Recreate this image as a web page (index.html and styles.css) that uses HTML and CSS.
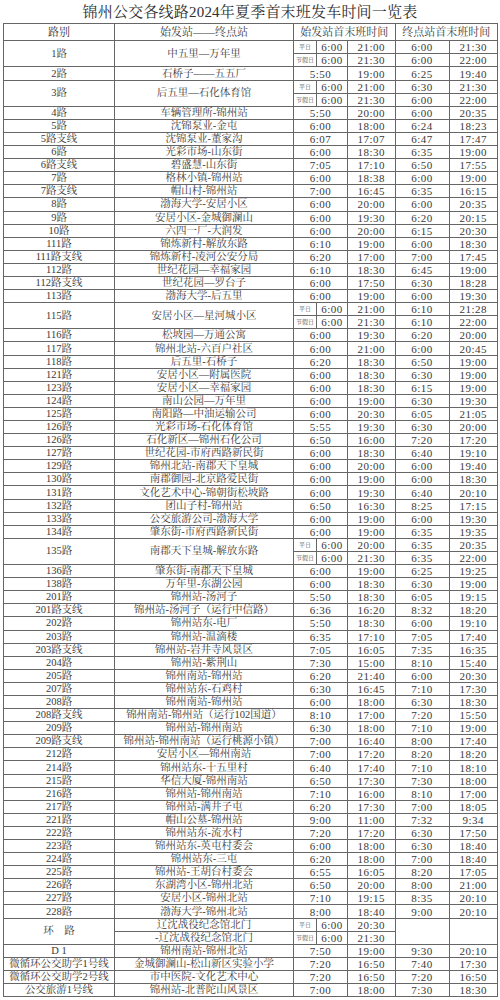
FILE: index.html
```html
<!DOCTYPE html>
<html lang="zh-CN">
<head>
<meta charset="utf-8">
<title>锦州公交各线路2024年夏季首末班发车时间一览表</title>
<link rel="stylesheet" href="styles.css">
</head>
<body>
<div class="page">
<h1 class="title">锦州公交各线路2024年夏季首末班发车时间一览表</h1>
<table class="sched">
<colgroup>
<col class="c-route"><col class="c-stn"><col class="c-lab"><col class="c-t1"><col class="c-t2"><col class="c-t3"><col class="c-t4">
</colgroup>
<thead>
<tr><th>路别</th><th>始发站——终点站</th><th colspan="3">始发站首末班时间</th><th colspan="2">终点站首末班时间</th></tr>
</thead>
<tbody>
<tr><th rowspan="2">1路</th><td rowspan="2" class="s">中五里—万年里</td><td class="l">平日</td><td>6:00</td><td>21:00</td><td>6:00</td><td>21:30</td></tr>
<tr><td class="l">节假日</td><td>6:00</td><td>21:30</td><td>6:00</td><td>22:00</td></tr>
<tr><th>2路</th><td class="s">石桥子——五五厂</td><td colspan="2">5:50</td><td>19:00</td><td>6:25</td><td>19:40</td></tr>
<tr><th rowspan="2">3路</th><td rowspan="2" class="s">后五里—石化体育馆</td><td class="l">平日</td><td>6:00</td><td>21:00</td><td>6:30</td><td>21:30</td></tr>
<tr><td class="l">节假日</td><td>6:00</td><td>21:30</td><td>6:00</td><td>22:00</td></tr>
<tr><th>4路</th><td class="s">车辆管理所-锦州站</td><td colspan="2">5:50</td><td>20:00</td><td>6:00</td><td>20:35</td></tr>
<tr><th>5路</th><td class="s">沈锦泵业-金屯</td><td colspan="2">6:00</td><td>18:00</td><td>6:24</td><td>18:23</td></tr>
<tr><th>5路支线</th><td class="s">沈锦泵业-董家沟</td><td colspan="2">6:07</td><td>17:07</td><td>6:47</td><td>17:47</td></tr>
<tr><th>6路</th><td class="s">光彩市场-山东街</td><td colspan="2">6:00</td><td>18:30</td><td>6:35</td><td>19:00</td></tr>
<tr><th>6路支线</th><td class="s">碧盛慧-山东街</td><td colspan="2">7:05</td><td>17:10</td><td>6:50</td><td>17:55</td></tr>
<tr><th>7路</th><td class="s">格林小镇-锦州站</td><td colspan="2">6:00</td><td>18:38</td><td>6:00</td><td>19:00</td></tr>
<tr><th>7路支线</th><td class="s">帽山村-锦州站</td><td colspan="2">7:00</td><td>16:45</td><td>6:35</td><td>16:15</td></tr>
<tr><th>8路</th><td class="s">渤海大学-安居小区</td><td colspan="2">6:00</td><td>20:00</td><td>6:00</td><td>20:35</td></tr>
<tr><th>9路</th><td class="s">安居小区-金城御澜山</td><td colspan="2">6:00</td><td>19:30</td><td>6:20</td><td>20:15</td></tr>
<tr><th>10路</th><td class="s">六四一厂-大润发</td><td colspan="2">6:00</td><td>20:00</td><td>6:15</td><td>20:30</td></tr>
<tr><th>111路</th><td class="s">锦炼新村-解放东路</td><td colspan="2">6:10</td><td>19:00</td><td>6:00</td><td>18:30</td></tr>
<tr><th>111路支线</th><td class="s">锦炼新村-凌河公安分局</td><td colspan="2">6:20</td><td>17:00</td><td>7:00</td><td>17:45</td></tr>
<tr><th>112路</th><td class="s">世纪花园—幸福家园</td><td colspan="2">6:10</td><td>18:30</td><td>6:45</td><td>19:00</td></tr>
<tr><th>112路支线</th><td class="s">世纪花园—罗台子</td><td colspan="2">6:00</td><td>17:50</td><td>6:30</td><td>18:28</td></tr>
<tr><th>113路</th><td class="s">渤海大学-后五里</td><td colspan="2">6:00</td><td>19:00</td><td>6:00</td><td>19:30</td></tr>
<tr><th rowspan="2">115路</th><td rowspan="2" class="s">安居小区—星河城小区</td><td class="l">平日</td><td>6:00</td><td>21:00</td><td>6:10</td><td>21:28</td></tr>
<tr><td class="l">节假日</td><td>6:00</td><td>21:30</td><td>6:10</td><td>22:00</td></tr>
<tr><th>116路</th><td class="s">松坡园—万通公寓</td><td colspan="2">6:00</td><td>19:30</td><td>6:20</td><td>20:00</td></tr>
<tr><th>117路</th><td class="s">锦州北站-六百户社区</td><td colspan="2">6:00</td><td>21:00</td><td>6:00</td><td>20:45</td></tr>
<tr><th>118路</th><td class="s">后五里-石桥子</td><td colspan="2">6:20</td><td>18:30</td><td>6:50</td><td>19:00</td></tr>
<tr><th>121路</th><td class="s">安居小区—附属医院</td><td colspan="2">6:00</td><td>18:30</td><td>6:30</td><td>19:00</td></tr>
<tr><th>123路</th><td class="s">安居小区—幸福家园</td><td colspan="2">6:00</td><td>18:30</td><td>6:15</td><td>19:00</td></tr>
<tr><th>124路</th><td class="s">南山公园—万年里</td><td colspan="2">6:00</td><td>19:00</td><td>6:30</td><td>19:30</td></tr>
<tr><th>125路</th><td class="s">南阳路—中油运输公司</td><td colspan="2">6:00</td><td>20:30</td><td>6:05</td><td>21:05</td></tr>
<tr><th>126路</th><td class="s">光彩市场-石化体育馆</td><td colspan="2">5:55</td><td>19:30</td><td>6:30</td><td>20:00</td></tr>
<tr><th>126路</th><td class="s">石化新区—锦州石化公司</td><td colspan="2">6:50</td><td>16:00</td><td>7:20</td><td>17:20</td></tr>
<tr><th>127路</th><td class="s">世纪花园-市府西路新民街</td><td colspan="2">6:00</td><td>18:30</td><td>6:40</td><td>19:10</td></tr>
<tr><th>129路</th><td class="s">锦州北站-南郡天下皇城</td><td colspan="2">6:00</td><td>20:00</td><td>6:00</td><td>19:40</td></tr>
<tr><th>130路</th><td class="s">南郡御园-北京路爱民街</td><td colspan="2">6:00</td><td>19:00</td><td>6:00</td><td>18:30</td></tr>
<tr><th>131路</th><td class="s">文化艺术中心-锦朝街松坡路</td><td colspan="2">6:00</td><td>19:30</td><td>6:40</td><td>20:10</td></tr>
<tr><th>132路</th><td class="s">团山子村-锦州站</td><td colspan="2">6:50</td><td>16:30</td><td>8:25</td><td>17:15</td></tr>
<tr><th>133路</th><td class="s">公交旅游公司-渤海大学</td><td colspan="2">6:00</td><td>19:00</td><td>6:00</td><td>19:30</td></tr>
<tr><th>134路</th><td class="s">肇东街-市府西路新民街</td><td colspan="2">6:00</td><td>19:00</td><td>6:35</td><td>19:35</td></tr>
<tr><th rowspan="2">135路</th><td rowspan="2" class="s">南郡天下皇城-解放东路</td><td class="l">平日</td><td>6:00</td><td>20:00</td><td>6:35</td><td>20:35</td></tr>
<tr><td class="l">节假日</td><td>6:00</td><td>21:30</td><td>6:35</td><td>22:00</td></tr>
<tr><th>136路</th><td class="s">肇东街-南郡天下皇城</td><td colspan="2">6:00</td><td>19:00</td><td>6:25</td><td>19:25</td></tr>
<tr><th>138路</th><td class="s">万年里-东湖公园</td><td colspan="2">6:00</td><td>18:30</td><td>6:30</td><td>19:00</td></tr>
<tr><th>201路</th><td class="s">锦州站-汤河子</td><td colspan="2">5:50</td><td>18:30</td><td>6:05</td><td>19:15</td></tr>
<tr><th>201路支线</th><td class="s">锦州站-汤河子（运行中信路）</td><td colspan="2">6:36</td><td>16:20</td><td>8:32</td><td>18:20</td></tr>
<tr><th>202路</th><td class="s">锦州站东-电厂</td><td colspan="2">5:50</td><td>18:30</td><td>6:00</td><td>19:10</td></tr>
<tr><th>203路</th><td class="s">锦州站-温滴楼</td><td colspan="2">6:35</td><td>17:10</td><td>7:05</td><td>17:40</td></tr>
<tr><th>203路支线</th><td class="s">锦州站-岩井寺风景区</td><td colspan="2">7:05</td><td>16:05</td><td>7:35</td><td>16:35</td></tr>
<tr><th>204路</th><td class="s">锦州站-紫荆山</td><td colspan="2">7:30</td><td>15:00</td><td>8:10</td><td>15:40</td></tr>
<tr><th>205路</th><td class="s">锦州南站-锦州站</td><td colspan="2">6:20</td><td>21:40</td><td>6:00</td><td>20:30</td></tr>
<tr><th>207路</th><td class="s">锦州站东-石鸡村</td><td colspan="2">6:30</td><td>16:45</td><td>7:10</td><td>17:30</td></tr>
<tr><th>208路</th><td class="s">锦州南站-锦州站</td><td colspan="2">6:00</td><td>18:00</td><td>6:30</td><td>18:30</td></tr>
<tr><th>208路支线</th><td class="s">锦州南站-锦州站（运行102国道）</td><td colspan="2">8:10</td><td>17:00</td><td>7:20</td><td>15:50</td></tr>
<tr><th>209路</th><td class="s">锦州站-锦州南站</td><td colspan="2">6:30</td><td>18:00</td><td>7:10</td><td>19:00</td></tr>
<tr><th>209路支线</th><td class="s">锦州站-锦州南站（运行桃源小镇）</td><td colspan="2">7:00</td><td>16:40</td><td>8:00</td><td>17:40</td></tr>
<tr><th>212路</th><td class="s">安居小区—锦州南站</td><td colspan="2">7:00</td><td>17:20</td><td>8:20</td><td>18:20</td></tr>
<tr><th>214路</th><td class="s">锦州站东-十五里村</td><td colspan="2">6:40</td><td>17:40</td><td>7:10</td><td>18:10</td></tr>
<tr><th>215路</th><td class="s">华信大厦-锦州南站</td><td colspan="2">6:50</td><td>17:30</td><td>7:30</td><td>18:00</td></tr>
<tr><th>216路</th><td class="s">锦州站-锦州南站</td><td colspan="2">7:10</td><td>16:00</td><td>8:10</td><td>17:00</td></tr>
<tr><th>217路</th><td class="s">锦州站-满井子屯</td><td colspan="2">6:20</td><td>17:30</td><td>7:00</td><td>18:05</td></tr>
<tr><th>221路</th><td class="s">帽山公墓-锦州站</td><td colspan="2">9:00</td><td>11:00</td><td>7:32</td><td>9:34</td></tr>
<tr><th>222路</th><td class="s">锦州站东-流水村</td><td colspan="2">7:20</td><td>17:20</td><td>6:30</td><td>17:50</td></tr>
<tr><th>223路</th><td class="s">锦州站东-英屯村委会</td><td colspan="2">6:00</td><td>18:00</td><td>6:30</td><td>18:40</td></tr>
<tr><th>224路</th><td class="s">锦州站东-三屯</td><td colspan="2">6:20</td><td>18:00</td><td>7:00</td><td>18:40</td></tr>
<tr><th>225路</th><td class="s">锦州站-王胡台村委会</td><td colspan="2">6:55</td><td>16:05</td><td>8:20</td><td>17:05</td></tr>
<tr><th>226路</th><td class="s">东湖湾小区-锦州北站</td><td colspan="2">6:50</td><td>20:00</td><td>8:00</td><td>21:00</td></tr>
<tr><th>227路</th><td class="s">安居小区-锦州北站</td><td colspan="2">7:10</td><td>19:15</td><td>8:35</td><td>20:10</td></tr>
<tr><th>228路</th><td class="s">渤海大学-锦州北站</td><td colspan="2">8:00</td><td>18:40</td><td>9:00</td><td>20:10</td></tr>
<tr><th rowspan="2">环　路</th><td class="s">辽沈战役纪念馆北门</td><td class="l">平日</td><td>6:00</td><td>20:30</td><td rowspan="2"></td><td rowspan="2"></td></tr>
<tr><td class="s">-辽沈战役纪念馆北门</td><td class="l">节假日</td><td>6:00</td><td>21:30</td></tr>
<tr><th>D 1</th><td class="s">锦州南站-锦州北站</td><td colspan="2">7:50</td><td>19:00</td><td>9:30</td><td>20:10</td></tr>
<tr><th>微循环公交助学1号线</th><td class="s">金城御澜山-松山新区实验小学</td><td colspan="2">7:20</td><td>16:50</td><td>7:40</td><td>17:30</td></tr>
<tr><th>微循环公交助学2号线</th><td class="s">市中医院-文化艺术中心</td><td colspan="2">7:20</td><td>16:50</td><td>7:20</td><td>16:50</td></tr>
<tr><th>公交旅游1号线</th><td class="s">锦州站-北普陀山风景区</td><td colspan="2">7:00</td><td>18:00</td><td>7:30</td><td>18:30</td></tr>
</tbody>
</table>
</div>
</body>
</html>
```

FILE: styles.css
```css
html, body {
  margin: 0;
  padding: 0;
  background: #ffffff;
}

body {
  color: #3a3a3a;
  font-family: "Liberation Serif", "Noto Serif CJK SC", "Noto Sans CJK SC", serif;
}

.page {
  width: 494px;
  padding: 0 3px 3px 3px;
}

.title {
  margin: 0;
  height: 23px;
  font-size: 15px;
  font-weight: normal;
  line-height: 25px;
  text-align: center;
  letter-spacing: 0.2px;
  color: #2e2e2e;
}

.sched {
  width: 494px;
  border-collapse: collapse;
  table-layout: fixed;
}

.c-route { width: 111px; }
.c-stn { width: 179px; }
.c-lab { width: 23px; }
.c-t1 { width: 31px; }
.c-t2 { width: 47.5px; }
.c-t3 { width: 54px; }
.c-t4 { width: 48.5px; }

.sched th,
.sched td {
  border: 1px solid #666666;
  padding: 0;
  text-align: center;
  vertical-align: middle;
  font-weight: normal;
  white-space: nowrap;
  overflow: hidden;
}

.sched thead tr {
  height: 17.3px;
}

.sched thead th {
  font-size: 11px;
  line-height: 14px;
}

.sched tbody tr {
  height: 13.1px;
}

.sched tbody th,
.sched tbody td {
  font-size: 11px;
  line-height: 12px;
  letter-spacing: 0.5px;
}

.sched tbody th {
  font-size: 10.5px;
  letter-spacing: 0;
}

.sched td.s {
  font-size: 10.5px;
  letter-spacing: 0;
}

.sched td.l {
  font-size: 6px;
  line-height: 8px;
  letter-spacing: 0;
  color: #555555;
}
```
